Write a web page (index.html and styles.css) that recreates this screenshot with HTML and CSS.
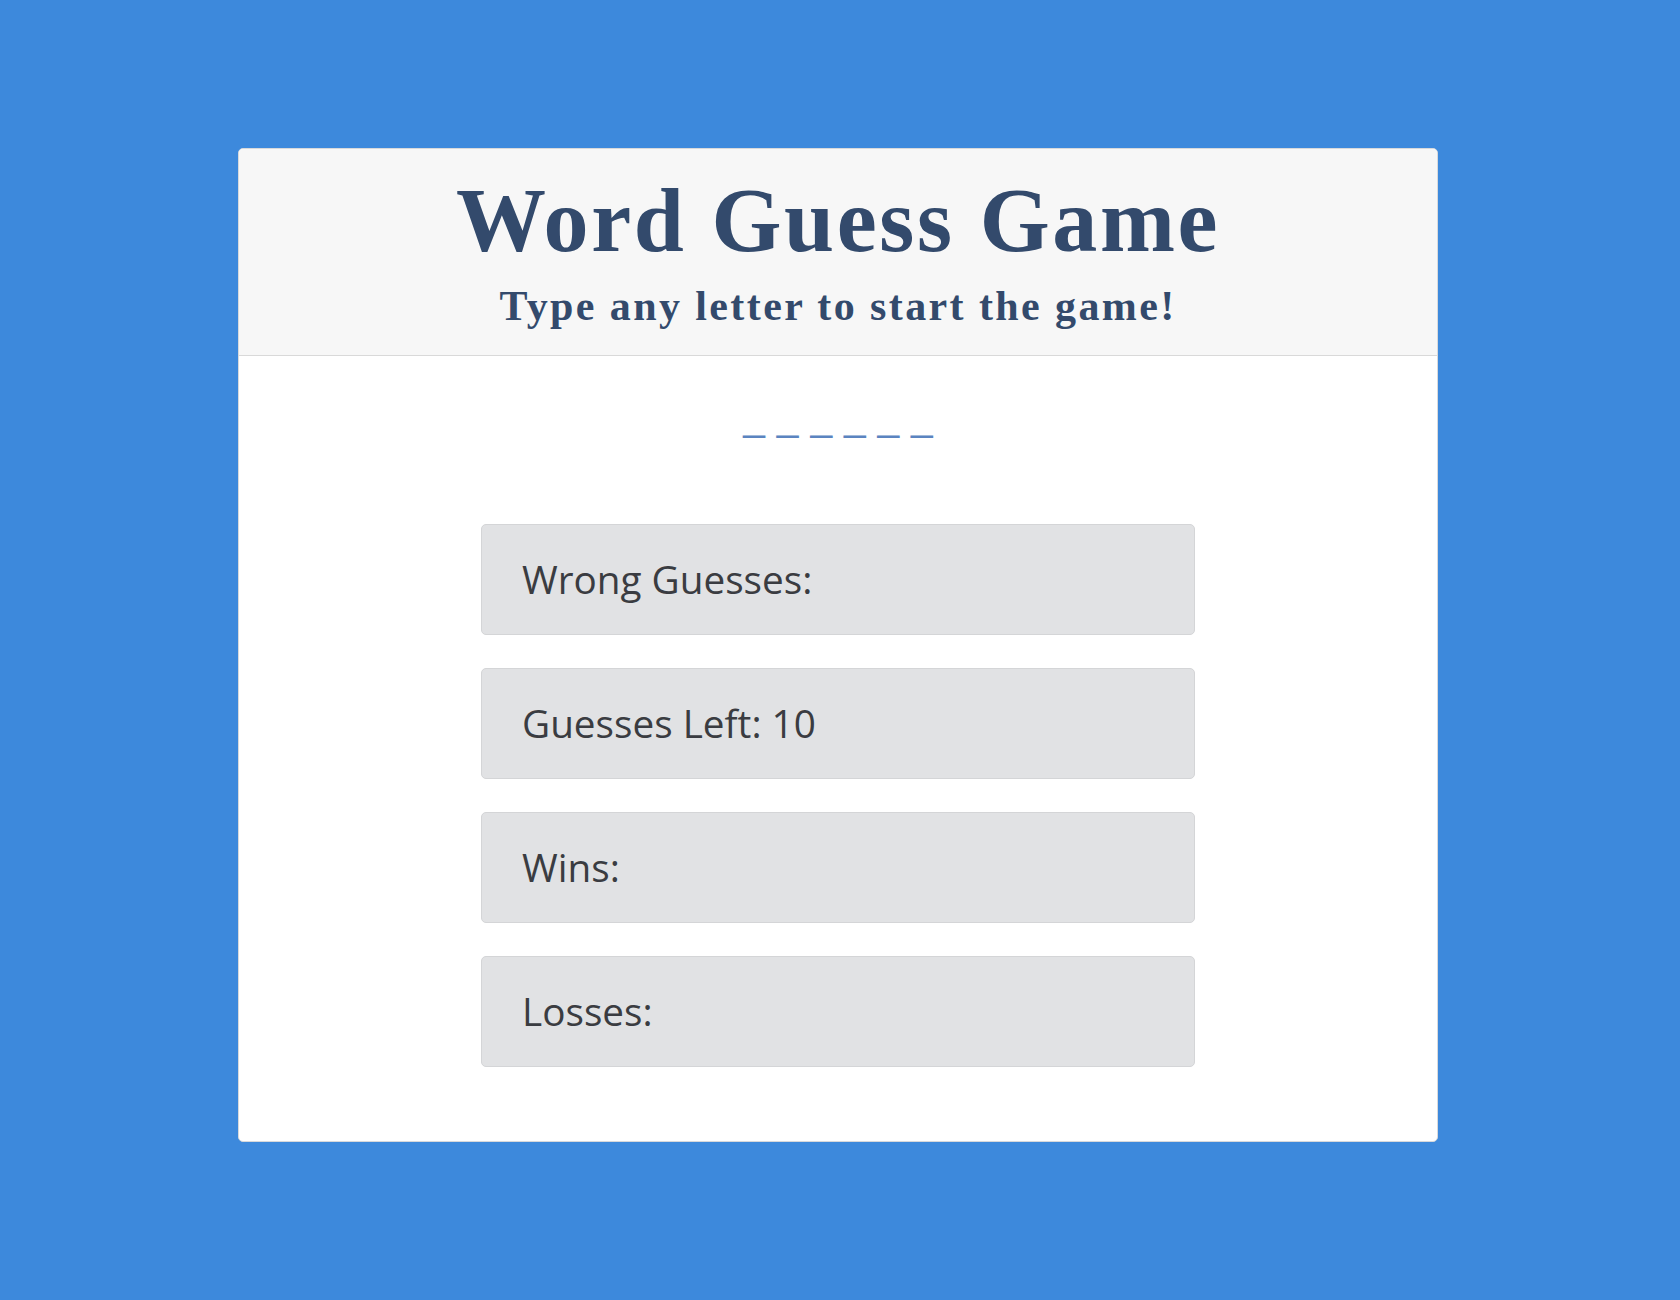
FILE: index.html
```html
<!DOCTYPE html>
<html lang="en">
<head>
<meta charset="utf-8">
<title>Word Guess Game</title>
<link rel="stylesheet" href="styles.css">
</head>
<body>
<div class="page">
  <div class="card">
    <div class="card-header">
      <h1 class="title">Word Guess Game</h1>
      <h2 class="subtitle">Type any letter to start the game!</h2>
    </div>
    <div class="card-body">
      <div class="word">_ _ _ _ _ _</div>
      <div class="stats">
        <div class="stat">Wrong Guesses:</div>
        <div class="stat">Guesses Left: 10</div>
        <div class="stat">Wins:</div>
        <div class="stat">Losses:</div>
      </div>
    </div>
  </div>
</div>
</body>
</html>
```

FILE: styles.css
```css
html, body {
  margin: 0;
  padding: 0;
  background: #3d89dc;
}

.page {
  padding: 148px 4px 0 0;
  min-height: 1300px;
  box-sizing: border-box;
}

.card {
  width: 1200px;
  margin: 0 auto;
  box-sizing: border-box;
  background: #ffffff;
  border: 1px solid #d8d9db;
  border-radius: 5px;
  overflow: hidden;
}

.card-header {
  background: #f7f7f7;
  border-bottom: 1px solid #d9d9d9;
  padding: 22px 0 24px;
  text-align: center;
  color: #334a6c;
  font-family: "Liberation Serif", "DejaVu Serif", serif;
  font-weight: bold;
}

.title {
  margin: 0;
  font-size: 90px;
  line-height: 100px;
  letter-spacing: 2.6px;
  font-weight: bold;
}

.subtitle {
  margin: 10px 0 0;
  font-size: 42px;
  line-height: 50px;
  letter-spacing: 2.4px;
  font-weight: bold;
}

.card-body {
  padding: 37px 0 74px;
}

.word {
  font-family: "Liberation Sans", Arial, sans-serif;
  font-size: 39px;
  line-height: 48px;
  word-spacing: 1px;
  color: #5b84c0;
  text-align: center;
  white-space: pre;
}

.stats {
  width: 714px;
  margin: 83px auto 0;
  display: flex;
  flex-direction: column;
  gap: 33px;
}

.stat {
  box-sizing: border-box;
  height: 111px;
  background: #e1e2e4;
  border: 1px solid #d4d5d7;
  border-radius: 5px;
  padding: 25px 40px 0;
  font-family: "Open Sans", "Noto Sans", sans-serif;
  font-size: 38.7px;
  line-height: 58px;
  color: #3a3c41;
}
```
